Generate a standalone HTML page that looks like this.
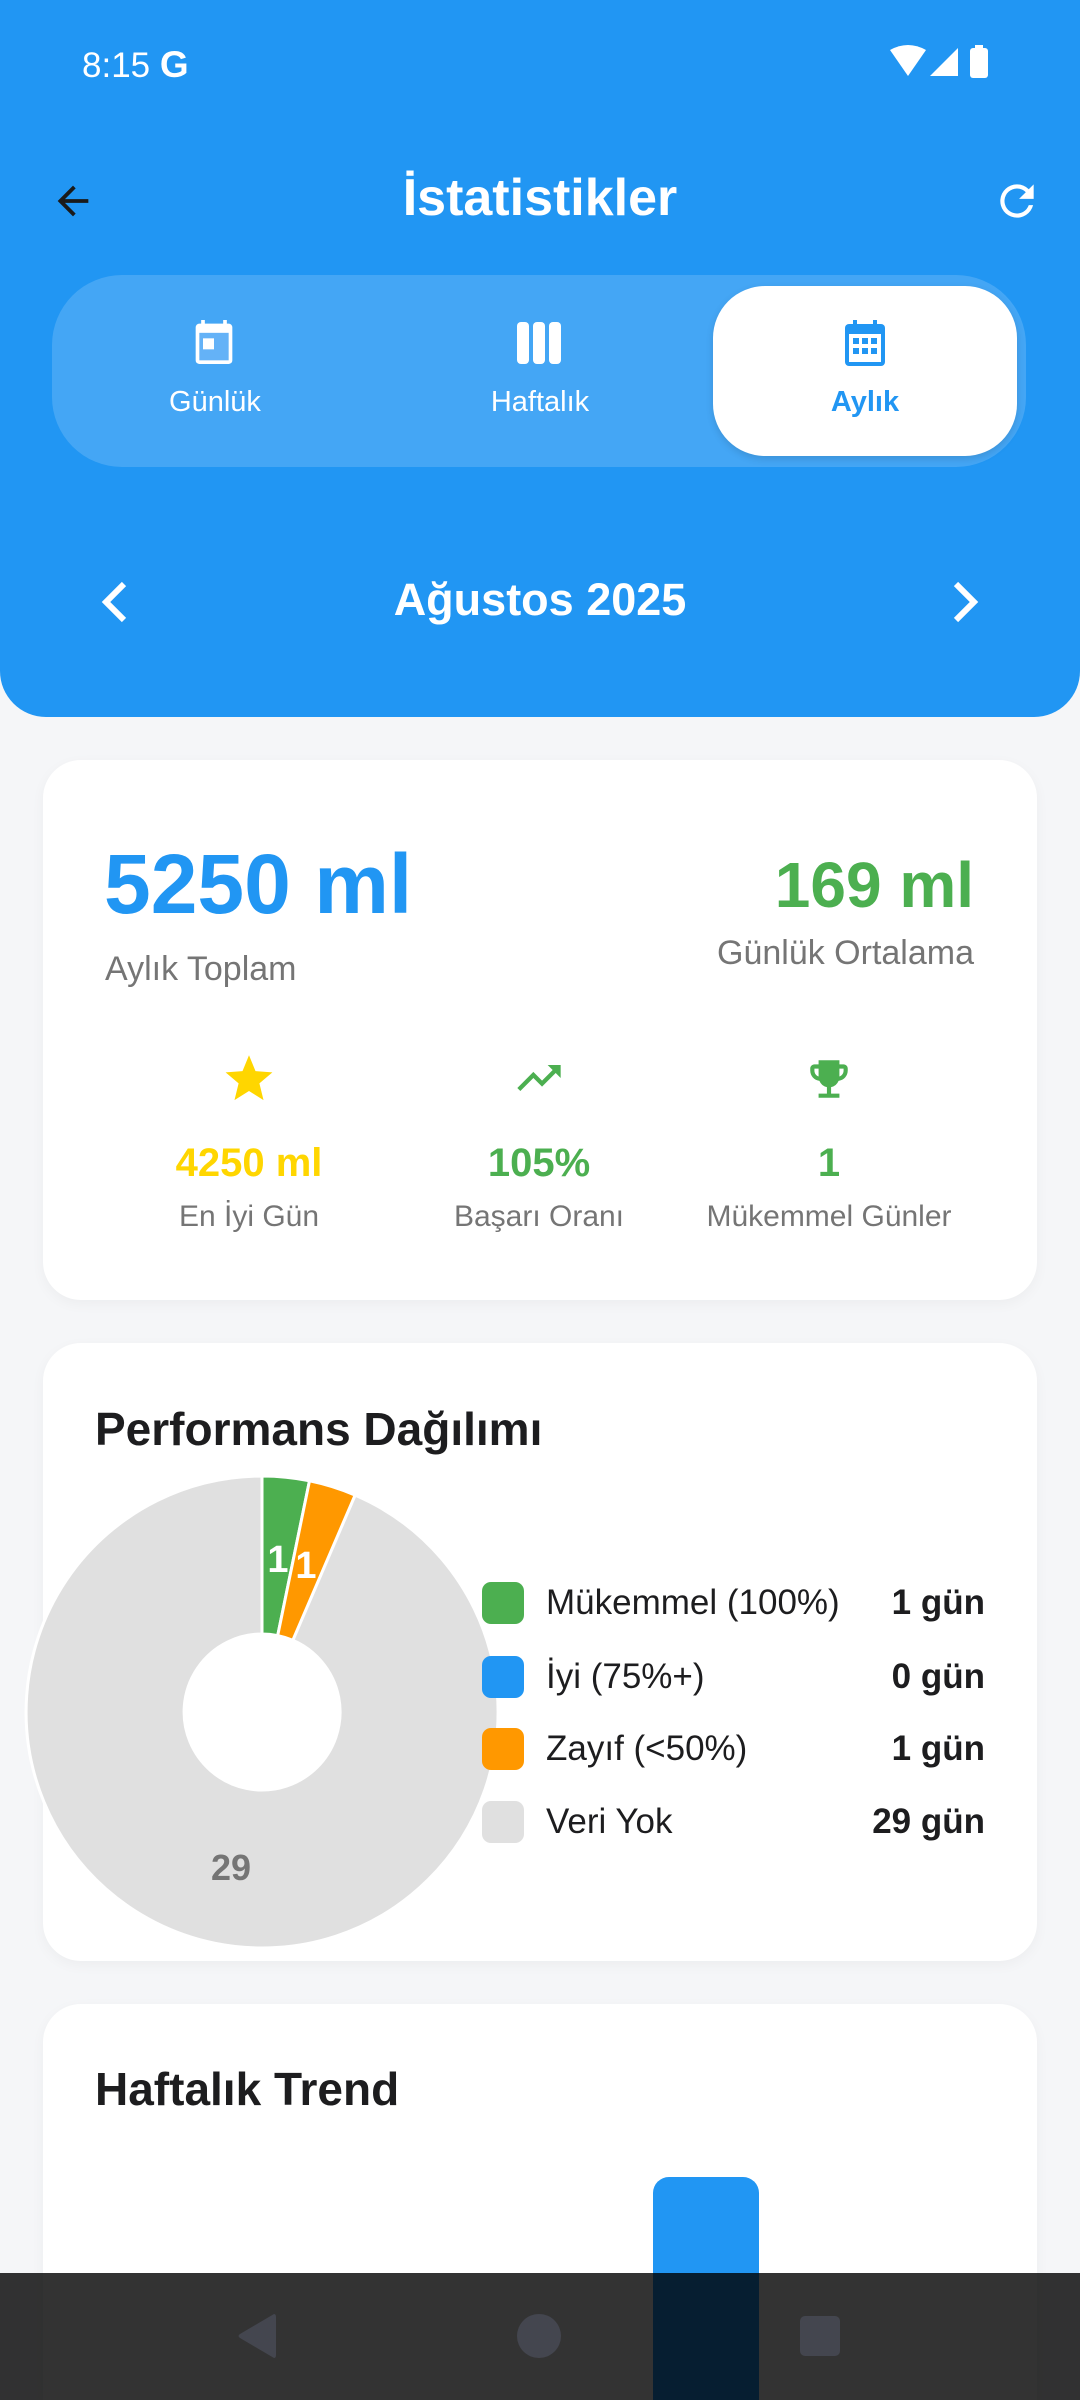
<!DOCTYPE html>
<html style="overflow:hidden;width:1080px;height:2400px"><head><meta charset="utf-8"><style>
*{margin:0;padding:0;box-sizing:border-box}
body{width:1080px;height:2400px;background:#F5F6F8;font-family:"Liberation Sans",sans-serif;position:relative;overflow:hidden}
.abs{position:absolute}
.header{left:0;top:0;width:1080px;height:717px;background:#2196F3;border-radius:0 0 46px 46px}
.card{background:#fff;border-radius:38px;box-shadow:0 4px 14px rgba(0,0,0,0.04)}
.c{text-align:center}
</style></head><body>
<div class="abs header"></div>
<div class="abs" style="left:82px;top:44px;color:#fff;font-size:35px;">8:15 <b style="font-size:37px">G</b></div>
<svg class="abs" style="left:888px;top:44px" width="120" height="40" viewBox="0 0 120 40">
<path d="M2 6 Q20 -4 38 6 L20 32 Z" fill="#fff"/>
<path d="M42 32 L70 4 L70 32 Z" fill="#fff"/>
<rect x="82" y="4" width="18" height="30" rx="3" fill="#fff"/><rect x="87" y="1" width="8" height="4" fill="#fff"/>
</svg>
<svg class="abs" style="left:50px;top:178px" width="46" height="46" viewBox="0 0 24 24"><path d="M20 11H7.8l5.6-5.6L12 4l-8 8 8 8 1.4-1.4L7.8 13H20z" fill="#1a1a1a"/></svg>
<div class="abs c" style="left:0;width:1080px;top:168px;color:#fff;font-size:52px;font-weight:bold">İstatistikler</div>
<svg class="abs" style="left:992px;top:176px" width="50" height="50" viewBox="0 0 24 24"><path d="M17.65 6.35A7.96 7.96 0 0 0 12 4a8 8 0 1 0 7.73 10h-2.08A6 6 0 1 1 12 6c1.66 0 3.14.69 4.22 1.78L13 11h7V4z" fill="#fff"/></svg>
<div class="abs" style="left:52px;top:275px;width:974px;height:192px;border-radius:70px;background:rgba(255,255,255,0.16)"></div>
<div class="abs" style="left:713px;top:286px;width:304px;height:170px;border-radius:52px;background:#fff;box-shadow:0 3px 8px rgba(0,0,0,0.12)"></div>
<svg class="abs" style="left:192px;top:318px" width="44" height="48" viewBox="0 0 24 26"><path d="M5 1h2v3H5zM17 1h2v3h-2z" fill="#fff"/><rect x="2" y="3" width="20" height="22" rx="2" fill="#fff"/><rect x="4" y="8" width="16" height="15" fill="#64B2F7"/><rect x="6" y="11" width="6" height="6" fill="#fff"/></svg>
<div class="abs c" style="left:115px;width:200px;top:386px;color:#fff;font-size:29px">Günlük</div>
<svg class="abs" style="left:515px;top:322px" width="48" height="42" viewBox="0 0 24 21"><rect x="1" y="0" width="6" height="21" rx="2" fill="#fff"/><rect x="9" y="0" width="6" height="21" rx="2" fill="#fff"/><rect x="17" y="0" width="6" height="21" rx="2" fill="#fff"/></svg>
<div class="abs c" style="left:440px;width:200px;top:386px;color:#fff;font-size:29px">Haftalık</div>
<svg class="abs" style="left:845px;top:320px" width="40" height="46" viewBox="0 0 20 23"><path d="M4 0h2v3H4zM14 0h2v3h-2z" fill="#2196F3"/><rect x="0" y="2" width="20" height="21" rx="2" fill="#2196F3"/><rect x="2" y="7" width="16" height="14" fill="#fff"/><g fill="#2196F3"><rect x="4" y="9" width="3" height="3"/><rect x="8.5" y="9" width="3" height="3"/><rect x="13" y="9" width="3" height="3"/><rect x="4" y="14" width="3" height="3"/><rect x="8.5" y="14" width="3" height="3"/><rect x="13" y="14" width="3" height="3"/></g></svg>
<div class="abs c" style="left:765px;width:200px;top:386px;color:#2196F3;font-size:29px;font-weight:bold">Aylık</div>
<svg class="abs" style="left:98px;top:580px" width="34" height="44" viewBox="0 0 17 22"><path d="M13 2 L4 11 L13 20" stroke="#fff" stroke-width="3" fill="none"/></svg>
<div class="abs c" style="left:0;width:1080px;top:574px;color:#fff;font-size:45px;font-weight:bold">Ağustos 2025</div>
<svg class="abs" style="left:948px;top:580px" width="34" height="44" viewBox="0 0 17 22"><path d="M4 2 L13 11 L4 20" stroke="#fff" stroke-width="3" fill="none"/></svg>

<div class="abs card" style="left:43px;top:760px;width:994px;height:540px"></div>
<div class="abs" style="left:104px;top:836px;color:#2196F3;font-size:84px;font-weight:bold">5250 ml</div>
<div class="abs" style="left:105px;top:950px;color:#757575;font-size:34px">Aylık Toplam</div>
<div class="abs" style="right:106px;top:848px;color:#4CAF50;font-size:64px;font-weight:bold;text-align:right">169 ml</div>
<div class="abs" style="right:106px;top:934px;color:#757575;font-size:34px;text-align:right">Günlük Ortalama</div>
<svg class="abs" style="left:222px;top:1052px" width="54" height="52" viewBox="0 0 24 24"><path d="M12 1.5l3 7.3 7.8.6-6 5.1 1.9 7.7L12 18l-6.7 4.2 1.9-7.7-6-5.1 7.8-.6z" fill="#FFD600"/></svg>
<svg class="abs" style="left:510px;top:1052px" width="58" height="52" viewBox="0 0 24 24"><path d="M16 6l2.3 2.3-4.9 4.9-4-4L2 16.6 3.4 18l6-6 4 4 6.3-6.3L22 12V6z" fill="#4CAF50"/></svg>
<svg class="abs" style="left:804px;top:1054px" width="50" height="50" viewBox="0 0 24 24"><path d="M19 5h-2V3H7v2H5c-1.1 0-2 .9-2 2v1c0 2.5 1.9 4.6 4.4 4.9A5 5 0 0 0 11 15.9V19H7v2h10v-2h-4v-3.1a5 5 0 0 0 3.6-3C19.1 12.6 21 10.5 21 8V7c0-1.1-.9-2-2-2zM5 8V7h2v3.8C5.8 10.4 5 9.3 5 8zm14 0c0 1.3-.8 2.4-2 2.8V7h2z" fill="#4CAF50"/></svg>
<div class="abs c" style="left:99px;width:300px;top:1141px;color:#FFD600;font-size:40px;font-weight:bold">4250 ml</div>
<div class="abs c" style="left:99px;width:300px;top:1200px;color:#757575;font-size:30px">En İyi Gün</div>
<div class="abs c" style="left:389px;width:300px;top:1141px;color:#4CAF50;font-size:40px;font-weight:bold">105%</div>
<div class="abs c" style="left:389px;width:300px;top:1200px;color:#757575;font-size:30px">Başarı Oranı</div>
<div class="abs c" style="left:679px;width:300px;top:1141px;color:#4CAF50;font-size:40px;font-weight:bold">1</div>
<div class="abs c" style="left:659px;width:340px;top:1200px;color:#757575;font-size:30px">Mükemmel Günler</div>

<div class="abs card" style="left:43px;top:1343px;width:994px;height:618px"></div>
<div class="abs" style="left:95px;top:1402px;color:#1d1d1f;font-size:46px;font-weight:bold">Performans Dağılımı</div>
<svg class="abs" style="left:22px;top:1472px" width="480" height="480" viewBox="-240 -240 480 480">
<g stroke="#fff" stroke-width="3">
<path d="M93.1,-216.9 A236 236 0 1 1 0,-236 L0,-78 A78 78 0 1 0 30.8,-71.7 Z" fill="#E0E0E0"/>
<path d="M0,-236 A236 236 0 0 1 47.5,-231.2 L15.7,-76.4 A78 78 0 0 0 0,-78 Z" fill="#4CAF50"/>
<path d="M47.5,-231.2 A236 236 0 0 1 93.1,-216.9 L30.8,-71.7 A78 78 0 0 0 15.7,-76.4 Z" fill="#FF9800"/>
</g>
<g font-family="Liberation Sans" font-weight="bold" text-anchor="middle">
<text x="16" y="-140" font-size="38" fill="#fff">1</text>
<text x="44" y="-134" font-size="38" fill="#fff">1</text>
<text x="-31" y="168" font-size="36" fill="#757575">29</text>
</g></svg>
<div class="abs" style="left:482px;top:1582px;width:42px;height:42px;border-radius:9px;background:#4CAF50"></div>
<div class="abs" style="left:482px;top:1656px;width:42px;height:42px;border-radius:9px;background:#2196F3"></div>
<div class="abs" style="left:482px;top:1728px;width:42px;height:42px;border-radius:9px;background:#FF9800"></div>
<div class="abs" style="left:482px;top:1801px;width:42px;height:42px;border-radius:9px;background:#E0E0E0"></div>
<div class="abs" style="left:546px;top:1582px;font-size:35px;color:#1d1d1f;line-height:42px">Mükemmel (100%)</div>
<div class="abs" style="left:546px;top:1656px;font-size:35px;color:#1d1d1f;line-height:42px">İyi (75%+)</div>
<div class="abs" style="left:546px;top:1728px;font-size:35px;color:#1d1d1f;line-height:42px">Zayıf (&lt;50%)</div>
<div class="abs" style="left:546px;top:1801px;font-size:35px;color:#1d1d1f;line-height:42px">Veri Yok</div>
<div class="abs" style="right:95px;top:1582px;font-size:35px;font-weight:bold;color:#1d1d1f;line-height:42px">1 gün</div>
<div class="abs" style="right:95px;top:1656px;font-size:35px;font-weight:bold;color:#1d1d1f;line-height:42px">0 gün</div>
<div class="abs" style="right:95px;top:1728px;font-size:35px;font-weight:bold;color:#1d1d1f;line-height:42px">1 gün</div>
<div class="abs" style="right:95px;top:1801px;font-size:35px;font-weight:bold;color:#1d1d1f;line-height:42px">29 gün</div>

<div class="abs card" style="left:43px;top:2004px;width:994px;height:396px;border-radius:38px 38px 0 0"></div>
<div class="abs" style="left:95px;top:2062px;color:#1d1d1f;font-size:46px;font-weight:bold">Haftalık Trend</div>
<div class="abs" style="left:653px;top:2177px;width:106px;height:223px;border-radius:16px 16px 0 0;background:#2196F3"></div>

<div class="abs" style="left:0;top:2273px;width:1080px;height:127px;background:rgba(0,0,0,0.8)"></div>
<svg class="abs" style="left:236px;top:2312px" width="42" height="48" viewBox="0 0 42 48"><path d="M38 2 Q40 2 40 5 L40 43 Q40 46 38 46 L4 26 Q1 24 4 22 Z" fill="#44464F"/></svg>
<div class="abs" style="left:517px;top:2314px;width:44px;height:44px;border-radius:50%;background:#44464F"></div>
<div class="abs" style="left:800px;top:2316px;width:40px;height:40px;border-radius:5px;background:#44464F"></div>
</body></html>
